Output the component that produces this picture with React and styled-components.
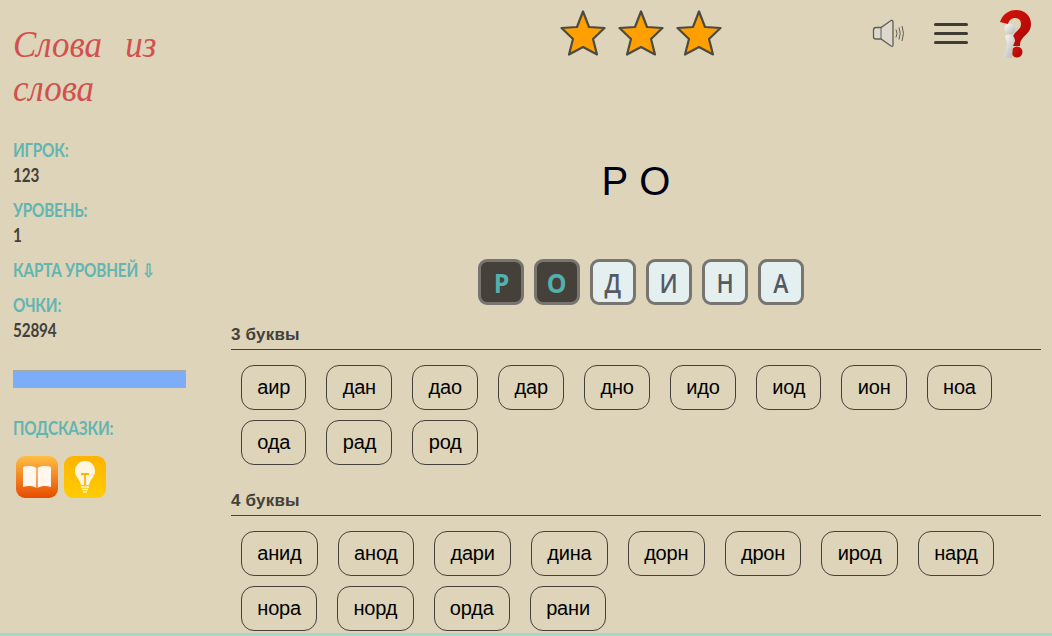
import React from "react";
import styled, { createGlobalStyle } from "styled-components";

const GlobalStyle = createGlobalStyle`
  html, body {
    margin: 0;
    padding: 0;
    height: 100%;
    overflow: hidden;
    background: #ddd4b9;
  }
`;

const words3 = ["аир", "дан", "дао", "дар", "дно", "идо", "иод", "ион", "ноа", "ода", "рад", "род"];
const words4 = ["анид", "анод", "дари", "дина", "дорн", "дрон", "ирод", "нард", "нора", "норд", "орда", "рани"];
const letters = [
  { ch: "Р", on: true },
  { ch: "О", on: true },
  { ch: "Д" },
  { ch: "И" },
  { ch: "Н" },
  { ch: "А" },
];

const Page = styled.div`
  position: relative;
  width: 1052px;
  height: 636px;
  overflow: hidden;
  display: flex;
  background: #ddd4b9;
`;

const Sidebar = styled.aside`
  width: 231px;
  flex: none;
  box-sizing: border-box;
  padding: 22px 0 0 13px;
`;

const Logo = styled.div`
  width: 200px;
  height: 88px;
  margin-bottom: 30px;
  font-family: "Liberation Serif", serif;
  font-style: italic;
  font-size: 38px;
  line-height: 44px;
  word-spacing: 16px;
  color: #d2504f;
  transform: scaleX(0.92);
  transform-origin: left top;
`;

const Label = styled.div`
  font-family: Lato, sans-serif;
  font-weight: 700;
  font-size: 18px;
  line-height: 20px;
  letter-spacing: -0.2px;
  white-space: nowrap;
  color: #63b5b2;
  margin-top: ${(p) => p.$top || 0}px;
  transform: scaleX(0.85);
  transform-origin: left center;
`;

const Value = styled.div`
  font-family: Lato, sans-serif;
  font-weight: 700;
  font-size: 18px;
  line-height: 20px;
  letter-spacing: -0.2px;
  color: #45413a;
  margin-top: 5px;
  transform: scaleX(0.85);
  transform-origin: left center;
`;

const Progress = styled.div`
  width: 171px;
  height: 16px;
  margin-top: 30px;
  background: #7dadf7;
  border: 1px solid #aaa9a0;
`;

const Hints = styled.div`
  display: flex;
  gap: 6px;
  margin: 18px 0 0 3px;
`;

const HintIcon = styled.svg`
  width: 42px;
  height: 42px;
  display: block;
`;

const Main = styled.main`
  flex: 1;
  min-width: 0;
  padding-right: 11px;
`;

const TopBar = styled.div`
  position: relative;
  height: 62px;
  display: flex;
`;

const Stars = styled.div`
  display: flex;
  gap: 4px;
  margin: 9px 0 0 325px;
`;

const Star = styled.svg`
  width: 54px;
  height: 48px;
  display: block;
`;

const Tools = styled.div`
  position: absolute;
  top: 8px;
  right: 0;
  display: flex;
  align-items: flex-start;
`;

const Speaker = styled.svg`
  width: 34px;
  height: 30px;
  margin: 11px 28px 0 0;
`;

const Burger = styled.div`
  width: 34px;
  margin: 15px 30px 0 0;
  display: flex;
  flex-direction: column;
  gap: 6px;
  span {
    display: block;
    height: 3px;
    border-radius: 2px;
    background: #3f3b35;
  }
`;

const Help = styled.svg`
  width: 34px;
  height: 52px;
  margin-right: 9px;
`;

const Typed = styled.div`
  height: 40px;
  margin-top: 99px;
  text-align: center;
  font-family: "Liberation Sans", Arial, sans-serif;
  font-size: 40px;
  line-height: 40px;
  color: #000014;
`;

const LetterRow = styled.div`
  display: flex;
  justify-content: center;
  gap: 10px;
  margin-top: 58px;
  padding-left: 10px;
`;

const Letter = styled.div`
  width: 46px;
  height: 46px;
  box-sizing: border-box;
  border: 3px solid #787570;
  border-radius: 9px;
  display: flex;
  align-items: center;
  justify-content: center;
  background: ${(p) => (p.$on ? "#45413a" : "#e4f0f0")};
  color: ${(p) => (p.$on ? "#52b0ae" : "#555962")};
`;

const Glyph = styled.span`
  font-family: "Open Sans", sans-serif;
  font-size: 27px;
  font-weight: ${(p) => (p.$on ? 700 : 600)};
  transform: scaleX(${(p) => (p.$on ? 0.92 : 0.85)});
`;

const Section = styled.section`
  margin-top: ${(p) => p.$top}px;
`;

const SectionTitle = styled.div`
  font-family: "Liberation Sans", Arial, sans-serif;
  font-weight: 700;
  font-size: 17px;
  line-height: 17px;
  letter-spacing: 0.2px;
  color: #45413a;
  padding-bottom: 6px;
  border-bottom: 1px solid #45413a;
`;

const Words = styled.div`
  display: flex;
  flex-wrap: wrap;
  gap: 10px 20px;
  padding: 15px 0 0 10px;
`;

const Word = styled.div`
  height: 45px;
  box-sizing: border-box;
  padding: 0 15.3px;
  border: 1px solid #45413a;
  border-radius: 13px;
  display: flex;
  align-items: center;
  font-family: "Liberation Sans", Arial, sans-serif;
  font-size: 20px;
  letter-spacing: -0.2px;
  color: #000;
`;

const BottomStrip = styled.div`
  position: absolute;
  left: 0;
  right: 0;
  bottom: 0;
  height: 3px;
  background: #a9d8cb;
`;

const StarIcon = () => (
  <Star viewBox="0 0 54 48">
    <path
      d="M27 2.5 L33 18 L48.5 19 L37 30 L41 45.5 L27 38 L13 45.5 L17 30 L5.5 19 L21 18 Z"
      fill="#ff9f00"
      stroke="#4d4a40"
      strokeWidth="2.2"
      strokeLinejoin="round"
    />
  </Star>
);

const App = () => {
  return (
    <Page>
      <GlobalStyle />
      <Sidebar>
        <Logo>
          Слова из
          <br />
          слова
        </Logo>
        <Label>ИГРОК:</Label>
        <Value>123</Value>
        <Label $top={15}>УРОВЕНЬ:</Label>
        <Value>1</Value>
        <Label $top={15}>КАРТА УРОВНЕЙ ⇩</Label>
        <Label $top={15}>ОЧКИ:</Label>
        <Value>52894</Value>
        <Progress />
        <Label $top={30}>ПОДСКАЗКИ:</Label>
        <Hints>
          <HintIcon viewBox="0 0 42 42">
            <defs>
              <linearGradient id="bookBg" x1="0" y1="0" x2="0" y2="1">
                <stop offset="0" stopColor="#ffbe45" />
                <stop offset="1" stopColor="#e64c00" />
              </linearGradient>
            </defs>
            <rect width="42" height="42" rx="9" fill="url(#bookBg)" />
            <path d="M20.3 12 C17 9.5 11 9.5 7 11 V31 C11 29.5 17 29.5 20.3 32 Z" fill="#fff6ee" />
            <path d="M21.7 12 C25 9.5 31 9.5 35 11 V31 C31 29.5 25 29.5 21.7 32 Z" fill="#fff6ee" />
          </HintIcon>
          <HintIcon viewBox="0 0 42 42">
            <defs>
              <linearGradient id="bulbBg" x1="0" y1="0" x2="0" y2="1">
                <stop offset="0" stopColor="#ffb300" />
                <stop offset="1" stopColor="#ffcc00" />
              </linearGradient>
            </defs>
            <rect width="42" height="42" rx="9" fill="url(#bulbBg)" />
            <path d="M21 5 C14.5 5 11 10 11 15 C11 21 16 23 17 29 H25 C26 23 31 21 31 15 C31 10 27.5 5 21 5 Z" fill="#fff6e0" />
            <path d="M17 18 H25 M21 18 V29" stroke="#ffb300" strokeWidth="1.8" fill="none" />
            <path d="M17 31 H25 M18 33.5 H24 M19 36 H23" stroke="#fff6e0" strokeWidth="1.5" />
          </HintIcon>
        </Hints>
      </Sidebar>
      <Main>
        <TopBar>
          <Stars>
            <StarIcon />
            <StarIcon />
            <StarIcon />
          </Stars>
          <Tools>
            <Speaker viewBox="0 0 34 30">
              <path
                d="M1.5 11 Q1.5 8.5 4 8.5 H9 L19 1.5 Q21 1 21 3 V26 Q21 28 19 27 L9 20 H4 Q1.5 20 1.5 18 Z"
                fill="#ddd8cb"
                stroke="#5f5d58"
                strokeWidth="1.3"
              />
              <path d="M9 8.5 V20" stroke="#5f5d58" strokeWidth="1" />
              <path d="M24 10.5 Q26 14.5 24 18.5 M27 8.5 Q29.5 14.5 27 20.5 M30 7 Q33 14.5 30 22" fill="none" stroke="#5f5d58" strokeWidth="1" />
            </Speaker>
            <Burger>
              <span />
              <span />
              <span />
            </Burger>
            <Help viewBox="0 0 34 52">
              <defs>
                <linearGradient id="qmark" x1="0" y1="0" x2="1" y2="1">
                  <stop offset="0" stopColor="#d8110c" />
                  <stop offset="1" stopColor="#a80a06" />
                </linearGradient>
                <linearGradient id="figure" x1="0" y1="0" x2="1" y2="1">
                  <stop offset="0" stopColor="#fbfbf9" />
                  <stop offset="1" stopColor="#b5b4b0" />
                </linearGradient>
              </defs>
              <path
                d="M2 14 C5 5 12 2 18 2 C27 2 33 8 33 16 C33 24 27 27 24 31 C22 33 22 36 22 38 H14 C13 33 14 29 17 25 C20 22 23 20 23 16 C23 12 20 10 17 10 C14 10 11 12 10 16 Z"
                fill="url(#qmark)"
              />
              <circle cx="19" cy="44" r="5.5" fill="url(#qmark)" />
              <circle cx="12" cy="21" r="5.5" fill="url(#figure)" />
              <path d="M7 28 C11 25 17 27 17 33 L15 38 L14 50 H5 L8 41 L9 35 Z" fill="url(#figure)" />
            </Help>
          </Tools>
        </TopBar>
        <Typed>Р О</Typed>
        <LetterRow>
          {letters.map((item, index) => {
            return (
              <Letter key={index} $on={item.on}>
                <Glyph $on={item.on}>{item.ch}</Glyph>
              </Letter>
            );
          })}
        </LetterRow>
        <Section $top={21}>
          <SectionTitle>3 буквы</SectionTitle>
          <Words>
            {words3.map((word) => {
              return <Word key={word}>{word}</Word>;
            })}
          </Words>
        </Section>
        <Section $top={27}>
          <SectionTitle>4 буквы</SectionTitle>
          <Words>
            {words4.map((word) => {
              return <Word key={word}>{word}</Word>;
            })}
          </Words>
        </Section>
      </Main>
      <BottomStrip />
    </Page>
  );
};

export default App;
